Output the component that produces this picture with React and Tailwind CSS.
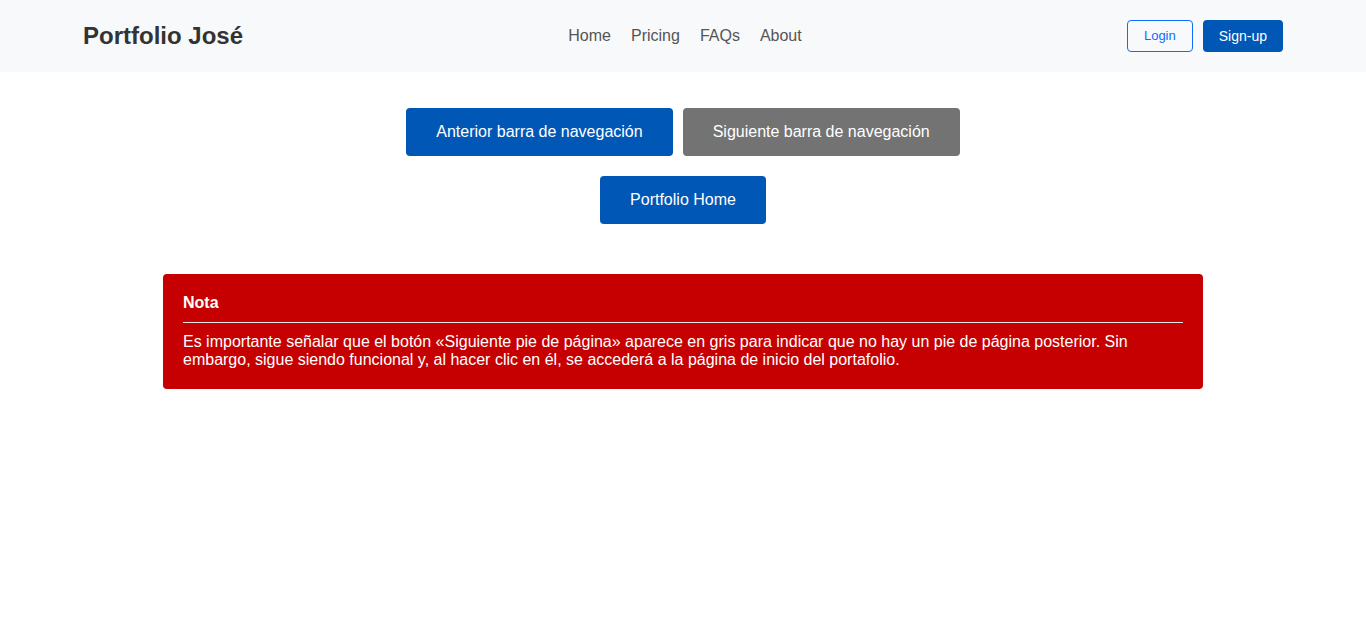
export default function App() {
  const font = { fontFamily: '"Liberation Sans", Arial, sans-serif' }

  return (
    <div className="min-h-screen bg-white" style={font}>
      <header className="h-[72px] bg-[#f8f9fa]">
        <div className="mx-auto grid h-full w-[1200px] grid-cols-3 items-center">
          <div className="text-[24px] font-bold leading-none text-[#333333]">Portfolio José</div>
          <nav className="flex items-center justify-center gap-[20px] pl-[4px] text-[16px] text-[#555555]">
            <a href="#">Home</a>
            <a href="#">Pricing</a>
            <a href="#">FAQs</a>
            <a href="#">About</a>
          </nav>
          <div className="flex items-center justify-end gap-[10px] text-[14px]">
            <button className="h-[32px] rounded-[4px] border border-[#0d6efd] px-[16px] text-[13px] text-[#0d6efd]">
              Login
            </button>
            <button className="h-[32px] rounded-[4px] bg-[#0057b5] px-[16px] text-white">
              Sign-up
            </button>
          </div>
        </div>
      </header>

      <main className="flex flex-col items-center pt-[36px]">
        <div className="flex gap-[10px]">
          <button className="h-[48px] rounded-[4px] bg-[#0057b5] px-[30px] text-[16px] text-white">
            Anterior barra de navegación
          </button>
          <button className="h-[48px] rounded-[4px] bg-[#737373] px-[30px] text-[16px] text-white">
            Siguiente barra de navegación
          </button>
        </div>
        <button className="mt-[20px] h-[48px] rounded-[4px] bg-[#0057b5] px-[30px] text-[16px] text-white">
          Portfolio Home
        </button>

        <section className="mt-[50px] w-[1040px] rounded-[4px] bg-[#c60000] p-[20px] text-[16px] leading-[18px] text-white">
          <h2 className="font-bold">Nota</h2>
          <hr className="my-[10px] border-t border-[#e8e8e8]" />
          <p>
            Es importante señalar que el botón «Siguiente pie de página» aparece en gris para indicar que no hay un pie de página posterior. Sin embargo, sigue siendo funcional y, al hacer clic en él, se accederá a la página de inicio del portafolio.
          </p>
        </section>
      </main>
    </div>
  )
}
